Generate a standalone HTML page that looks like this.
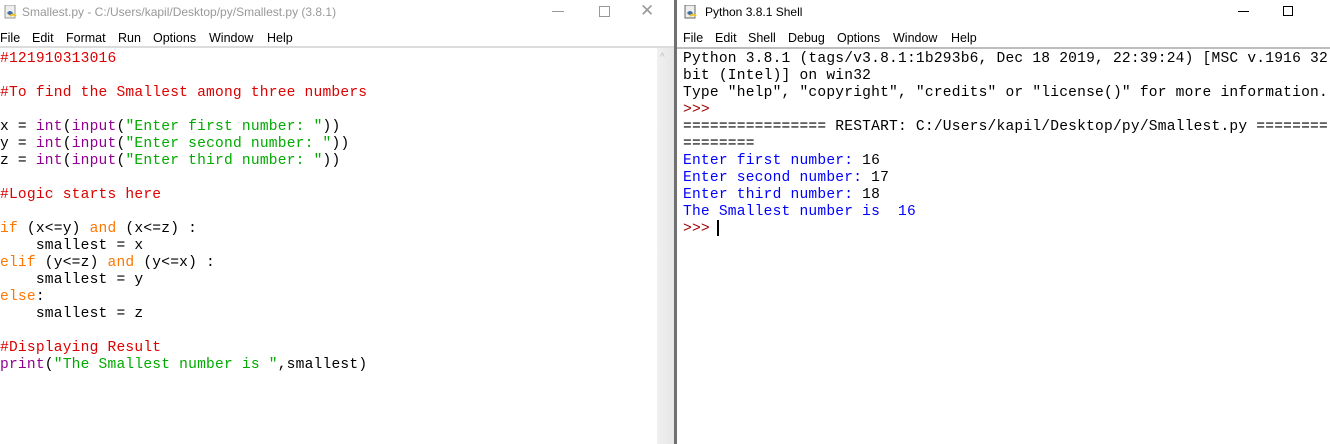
<!DOCTYPE html>
<html><head><meta charset="utf-8"><style>
*{margin:0;padding:0;box-sizing:border-box}
body{width:1330px;height:444px;overflow:hidden;background:#fff;position:relative;font-family:"Liberation Sans",sans-serif}
.abs{position:absolute}
.title{font-size:12px;top:5px;white-space:nowrap}
.m{position:absolute;font-size:12.5px;top:31px;white-space:nowrap}
.code{font-family:"Liberation Mono",monospace;font-size:14.6px;letter-spacing:0.2px;line-height:17px;white-space:pre;position:absolute;top:51px}
.c{color:#dd0000}.k{color:#ff7700}.b{color:#900090}.s{color:#00aa00}.o{color:#0000ff}.p{color:#a00000}
</style></head><body>
<div class="abs" style="left:4px;top:5px;width:14px;height:14px">
<svg width="14" height="14"><rect x="1" y="0" width="10" height="13" fill="#eee" stroke="#999"/><path d="M3 8 q3-4 6 0 q-3 4-6 0z" fill="#3a6ea5"/><path d="M6 11 q3-3 6 0" stroke="#f0c020" stroke-width="2" fill="none"/></svg></div>
<div class="abs title" style="left:22px;color:#999">Smallest.py - C:/Users/kapil/Desktop/py/Smallest.py (3.8.1)</div>
<div class="abs" style="left:552px;top:11px;width:12px;height:1px;background:#999"></div>
<div class="abs" style="left:599px;top:6px;width:11px;height:11px;border:1px solid #999"></div>
<div class="abs" style="left:640px;top:1px;font-size:17px;color:#999">✕</div>
<div class="m" style="left:0">File</div><div class="m" style="left:32px">Edit</div><div class="m" style="left:66px">Format</div><div class="m" style="left:118px">Run</div><div class="m" style="left:153px">Options</div><div class="m" style="left:209px">Window</div><div class="m" style="left:267px">Help</div>
<div class="abs" style="left:0;top:46px;width:675px;height:2px;background:#dcdcdc"></div>
<div class="abs" style="left:657px;top:48px;width:17px;height:396px;background:linear-gradient(90deg,#f0f0f0,#e6e6e6)"></div>
<div class="abs" style="left:660px;top:52px;font-size:10px;color:#bbb">^</div>
<div class="abs" style="left:674px;top:0;width:3px;height:444px;background:#707070"></div>
<div class="code" style="left:0"><span class="c">#121910313016</span>

<span class="c">#To find the Smallest among three numbers</span>

x = <span class="b">int</span>(<span class="b">input</span>(<span class="s">"Enter first number: "</span>))
y = <span class="b">int</span>(<span class="b">input</span>(<span class="s">"Enter second number: "</span>))
z = <span class="b">int</span>(<span class="b">input</span>(<span class="s">"Enter third number: "</span>))

<span class="c">#Logic starts here</span>

<span class="k">if</span> (x&lt;=y) <span class="k">and</span> (x&lt;=z) :
    smallest = x
<span class="k">elif</span> (y&lt;=z) <span class="k">and</span> (y&lt;=x) :
    smallest = y
<span class="k">else</span>:
    smallest = z

<span class="c">#Displaying Result</span>
<span class="b">print</span>(<span class="s">"The Smallest number is "</span>,smallest)</div>
<div class="abs" style="left:684px;top:5px;width:14px;height:14px">
<svg width="14" height="14"><rect x="1" y="0" width="10" height="13" fill="#eee" stroke="#666"/><path d="M3 8 q3-4 6 0 q-3 4-6 0z" fill="#3a6ea5"/><path d="M6 11 q3-3 6 0" stroke="#f0c020" stroke-width="2" fill="none"/></svg></div>
<div class="abs title" style="left:705px;color:#000">Python 3.8.1 Shell</div>
<div class="abs" style="left:1238px;top:11px;width:11px;height:1px;background:#000"></div>
<div class="abs" style="left:1283px;top:6px;width:10px;height:10px;border:1px solid #000"></div>
<div class="m" style="left:683px">File</div><div class="m" style="left:715px">Edit</div><div class="m" style="left:748px">Shell</div><div class="m" style="left:788px">Debug</div><div class="m" style="left:837px">Options</div><div class="m" style="left:893px">Window</div><div class="m" style="left:951px">Help</div>
<div class="abs" style="left:677px;top:47px;width:653px;height:2px;background:#bdbdbd"></div>
<div class="code" style="left:683px">Python 3.8.1 (tags/v3.8.1:1b293b6, Dec 18 2019, 22:39:24) [MSC v.1916 32
bit (Intel)] on win32
Type "help", "copyright", "credits" or "license()" for more information.
<span class="p">&gt;&gt;&gt;</span>
================ RESTART: C:/Users/kapil/Desktop/py/Smallest.py ========
========
<span class="o">Enter first number: </span>16
<span class="o">Enter second number: </span>17
<span class="o">Enter third number: </span>18
<span class="o">The Smallest number is  16</span>
<span class="p">&gt;&gt;&gt;</span> </div>
<div class="abs" style="left:717px;top:220px;width:2px;height:16px;background:#000"></div>
</body></html>
